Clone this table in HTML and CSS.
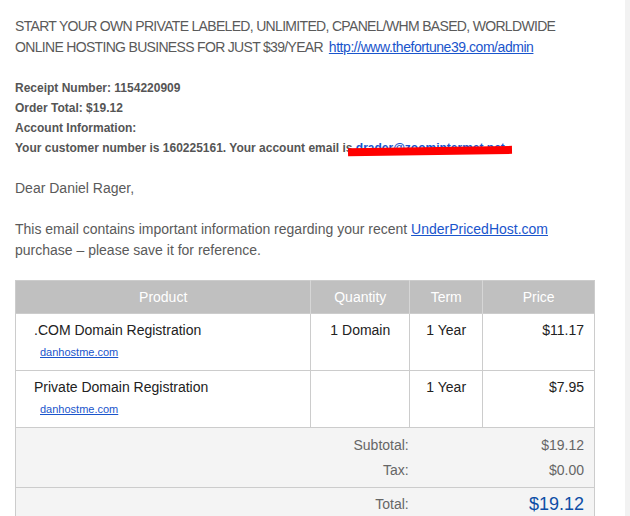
FILE: index.html
```html
<!DOCTYPE html>
<html>
<head>
<meta charset="utf-8">
<link rel="stylesheet" href="styles.css">
</head>
<body>
<div class="page">
  <main class="mail">
    <p class="promo"><span class="caps">START YOUR OWN PRIVATE LABELED, UNLIMITED, CPANEL/WHM BASED, WORLDWIDE ONLINE HOSTING BUSINESS FOR JUST $39/YEAR</span> <a class="url" href="#">http://www.thefortune39.com/admin</a></p>
    <div class="receipt">
      <div>Receipt Number: 1154220909</div>
      <div>Order Total: $19.12</div>
      <div>Account Information:</div>
      <div>Your customer number is 160225161. Your account email is <span class="email"><a href="#">drader@zoomintermet.net</a><span class="redact"></span></span></div>
    </div>
    <p class="text">Dear Daniel Rager,</p>
    <p class="text last">This email contains important information regarding your recent <a href="#">UnderPricedHost.com</a> purchase – please save it for reference.</p>
    <table class="order">
      <colgroup>
        <col class="c-prod"><col class="c-qty"><col class="c-term"><col class="c-price">
      </colgroup>
      <thead>
        <tr><th>Product</th><th>Quantity</th><th>Term</th><th>Price</th></tr>
      </thead>
      <tbody>
        <tr class="item">
          <td class="prod">.COM Domain Registration<a class="dom" href="#">danhostme.com</a></td>
          <td class="mid">1 Domain</td>
          <td class="mid">1 Year</td>
          <td class="price">$11.17</td>
        </tr>
        <tr class="item">
          <td class="prod">Private Domain Registration<a class="dom" href="#">danhostme.com</a></td>
          <td class="mid"></td>
          <td class="mid">1 Year</td>
          <td class="price">$7.95</td>
        </tr>
        <tr class="sum first">
          <td colspan="2" class="label">Subtotal:</td>
          <td colspan="2" class="val">$19.12</td>
        </tr>
        <tr class="sum last">
          <td colspan="2" class="label">Tax:</td>
          <td colspan="2" class="val">$0.00</td>
        </tr>
        <tr class="sum total">
          <td colspan="2" class="label">Total:</td>
          <td colspan="2" class="val">$19.12</td>
        </tr>
      </tbody>
    </table>
  </main>
  <aside class="edge"></aside>
</div>
</body>
</html>
```
FILE: styles.css
```css
html, body {
  margin: 0;
  padding: 0;
  background: #fff;
}
body {
  font-family: "Liberation Sans", Arial, sans-serif;
  color: #555;
  overflow: hidden;
}
.page {
  display: flex;
  width: 630px;
  height: 516px;
  overflow: hidden;
}
.mail {
  flex: 1;
  padding: 16px 0 0 15px;
}
.edge {
  width: 5px;
  background: #f2f2f2;
}
a {
  color: #1a55cc;
  text-decoration: underline;
}
.promo, .text {
  width: 580px;
  margin: 0 0 20px;
  font-size: 14px;
  line-height: 21px;
  color: #5a5a5a;
}
.text.last {
  margin-bottom: 19px;
}
.caps {
  letter-spacing: -0.68px;
}
.url {
  letter-spacing: -0.45px;
  margin-left: 2px;
}
.receipt {
  font-size: 12px;
  font-weight: bold;
  line-height: 20px;
  color: #555;
  margin-bottom: 20px;
}
.email {
  position: relative;
}
.redact {
  position: absolute;
  left: -8px;
  top: 6px;
  width: 164px;
  height: 8px;
  background: #ff0000;
  transform: rotate(-0.8deg);
}
.order {
  width: 580px;
  border-collapse: collapse;
  font-size: 14px;
  color: #222;
  border: 1px solid #cccccc;
}
.c-prod { width: 296px; }
.c-qty { width: 99px; }
.c-term { width: 73px; }
.c-price { width: 112px; }
.order th {
  background: #c0c0c0;
  color: #fff;
  font-weight: normal;
  padding: 8px 0;
  line-height: 16px;
  border-left: 1px solid #d6d6d6;
  text-align: center;
  vertical-align: middle;
}
.order th:first-child {
  border-left: none;
}
.item td {
  border: 1px solid #cccccc;
  vertical-align: top;
  padding: 8px 10px 11px;
  line-height: 16px;
}
.item td.prod {
  padding-left: 18px;
}
.dom {
  display: block;
  font-size: 11px;
  margin: 7px 0 0 6px;
  line-height: 14px;
}
.mid {
  text-align: center;
}
.price {
  text-align: right;
}
.sum td {
  background: #f4f4f4;
  color: #666;
  font-size: 14px;
  line-height: 16px;
  padding: 0 10px 0 0;
  text-align: right;
}
.sum td.label {
  padding-right: 1px;
}
.sum.first td {
  padding-top: 9px;
}
.sum.last td {
  padding-top: 9px;
  padding-bottom: 9px;
}
.sum.total td {
  border-top: 1px solid #cccccc;
  padding-top: 6px;
  padding-bottom: 6px;
  vertical-align: top;
  line-height: 20px;
}
.sum.total td.label {
  padding-top: 8px;
  line-height: 16px;
}
.sum.total .val {
  color: #0d4ea6;
  font-size: 18px;
}
```
